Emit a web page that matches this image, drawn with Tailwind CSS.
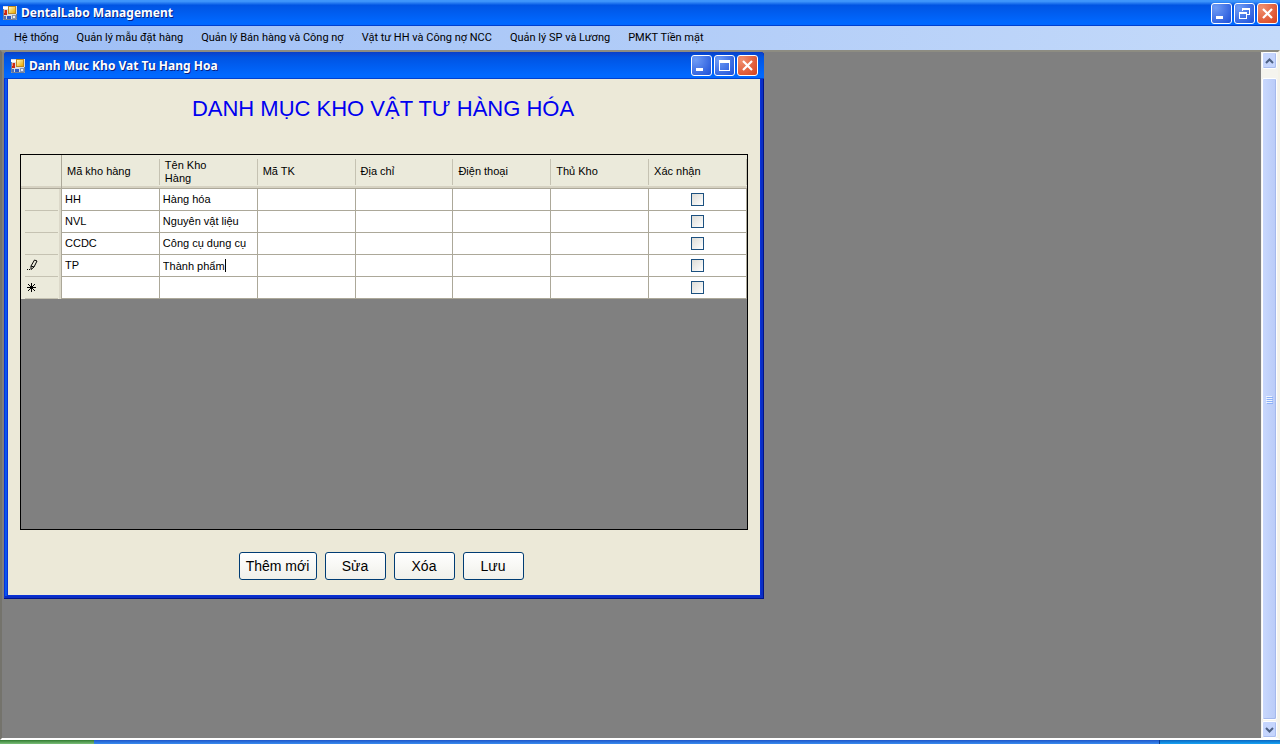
<!DOCTYPE html>
<html lang="vi">
<head>
<meta charset="utf-8">
<meta name="viewport" content="width=device-width, initial-scale=1">
<title>DentalLabo Management</title>
<script src="https://cdn.jsdelivr.net/npm/@tailwindcss/browser@4"></script>
</head>
<body class="flex h-screen flex-col overflow-hidden bg-[#808080] font-['Liberation_Sans',sans-serif] text-[11px] text-black">

<svg class="absolute size-0" aria-hidden="true">
  <linearGradient id="gold" x1="0" y1="0" x2="1" y2="1"><stop offset="0" stop-color="#fff9b8"/><stop offset="1" stop-color="#eda800"/></linearGradient>
  <symbol id="app" viewBox="0 0 14 14">
    <rect width="14" height="14" fill="#d8dce4"/>
    <rect y="1" width="5" height="2" fill="#fff"/>
    <rect x="1" y="4" width="3" height="5" fill="#cc2a12"/><rect x="1" y="4" width="1" height="3" fill="#f7896a"/>
    <rect x="5" y="0" width="8" height="8" fill="#c08a20"/><rect x="6" y="1" width="6" height="6" fill="url(#gold)"/>
    <rect x="1" y="10" width="2" height="3" fill="#4d6fb5"/><rect x="4" y="10" width="4" height="3" fill="#2d59c0"/><rect x="9" y="9" width="4" height="4" fill="#8795b3"/><rect x="10" y="10" width="2" height="2" fill="#e8ecf4"/>
    <path d="M.5 3v10.500H13.500V8" fill="none" stroke="#71809c"/>
  </symbol>
  <symbol id="min" viewBox="0 0 19 19"><rect x="4" y="12" width="7" height="3" fill="#fff"/></symbol>
  <symbol id="max" viewBox="0 0 19 19"><path d="M4 4h11v11H4zM5 7v7h9V7z" fill="#fff" fill-rule="evenodd"/></symbol>
  <symbol id="restore" viewBox="0 0 19 19"><path d="M7 4h8v7h-3v-1h2V6H8v1H7zM4 8h8v7H4zM5 10v4h6v-4z" fill="#fff" fill-rule="evenodd"/></symbol>
  <symbol id="close" viewBox="0 0 19 19"><path d="M5 5l9 9M14 5l-9 9" stroke="#fff" stroke-width="2.200"/></symbol>
</svg>

<header class="flex h-[26px] shrink-0 items-center gap-1 bg-linear-to-b from-[#3f96fb] from-5% via-[#0054e3] via-20% to-[#0068ff] to-85% pr-[2px] pl-[3px] shadow-[inset_0_-1px_0_#0040d0]">
  <svg class="size-[14px]" aria-hidden="true"><use href="#app"/></svg>
  <h1 class="flex-1 font-['Noto_Sans',sans-serif] text-[12px] font-bold text-white [text-shadow:1px_1px_0_#0a1f80]">DentalLabo Management</h1>
  <div class="flex gap-[2px]">
    <button aria-label="Thu nhỏ" class="size-[21px] rounded-[3px] border border-white bg-radial-[at_20%_20%] from-[#6f9cf5] to-[#1c4fd8]"><svg class="size-[19px]"><use href="#min"/></svg></button>
    <button aria-label="Khôi phục" class="size-[21px] rounded-[3px] border border-white bg-radial-[at_20%_20%] from-[#6f9cf5] to-[#1c4fd8]"><svg class="size-[19px]"><use href="#restore"/></svg></button>
    <button aria-label="Đóng" class="size-[21px] rounded-[3px] border border-white bg-radial-[at_20%_20%] from-[#f0906f] to-[#d8401c]"><svg class="size-[19px]"><use href="#close"/></svg></button>
  </div>
</header>

<nav class="flex h-[24px] shrink-0 items-center gap-[18px] bg-linear-to-r from-[#9ebef5] to-[#c4dafa] px-[14px] font-[Roboto,sans-serif] text-[11px] whitespace-nowrap">
  <button>Hệ thống</button>
  <button>Quản lý mẫu đặt hàng</button>
  <button>Quản lý Bán hàng và Công nợ</button>
  <button>Vật tư HH và Công nợ NCC</button>
  <button>Quản lý SP và Lương</button>
  <button>PMKT Tiền mặt</button>
</nav>

<div class="flex min-h-0 flex-1 border-t-2 border-r-2 border-b-2 border-l-2 border-t-[#8d8c82] border-r-[#f4f2e8] border-b-white border-l-[#74736c]">
  <main class="relative flex-1 overflow-hidden">
    <section aria-labelledby="win" class="absolute top-0 left-[2px] flex w-[760px] flex-col rounded-t-[4px] bg-[#0831d9] px-1 pb-1 shadow-[inset_-1px_-1px_0_#00138c,inset_1px_0_0_#0831d9,inset_-3px_-3px_0_#0a2ec4,inset_3px_0_0_#0855ee]">
      <div class="-mx-1 flex h-[27px] items-center gap-1 rounded-t-[4px] bg-linear-to-b from-[#0a3fc8] via-[#0054e3] via-20% to-[#0068ff] to-85% pr-[6px] pl-[7px] shadow-[inset_0_-1px_0_#0040d0]">
        <svg class="size-[14px]" aria-hidden="true"><use href="#app"/></svg>
        <h2 id="win" class="flex-1 font-['Noto_Sans',sans-serif] text-[12px] font-bold text-white [text-shadow:1px_1px_0_#0a1f80]">Danh Muc Kho Vat Tu Hang Hoa</h2>
        <div class="flex gap-[2px]">
          <button aria-label="Thu nhỏ" class="size-[21px] rounded-[3px] border border-white bg-radial-[at_20%_20%] from-[#6f9cf5] to-[#1c4fd8]"><svg class="size-[19px]"><use href="#min"/></svg></button>
          <button aria-label="Phóng to" class="size-[21px] rounded-[3px] border border-white bg-radial-[at_20%_20%] from-[#6f9cf5] to-[#1c4fd8]"><svg class="size-[19px]"><use href="#max"/></svg></button>
          <button aria-label="Đóng" class="size-[21px] rounded-[3px] border border-white bg-radial-[at_20%_20%] from-[#f0906f] to-[#d8401c]"><svg class="size-[19px]"><use href="#close"/></svg></button>
        </div>
      </div>

      <div class="bg-[#ece9d8] px-3 pt-4 pb-[15px]">
        <h3 class="pr-[2px] text-center text-[22px] leading-[27px] text-[#0000f0]">DANH MỤC KHO VẬT TƯ HÀNG HÓA</h3>
        <div class="mt-8 h-[376px] border border-black bg-[#808080]">
          <table class="w-full table-fixed border-separate border-spacing-0 text-left">
            <colgroup><col class="w-[41px]"><col><col><col><col><col><col><col></colgroup>
            <thead>
              <tr class="h-[34px] bg-[#ebeadb] *:border-b *:border-[#aca899] *:p-0 *:font-normal *:leading-[13px] *:shadow-[inset_0_-2px_0_#d6d2c2]">
                <td class="border-r"></td>
                <th scope="col"><div class="flex h-[26px] items-center border-r border-[#c5c2b2] pl-[5px]">Mã kho hàng</div></th>
                <th scope="col"><div class="flex h-[26px] items-center border-r border-[#c5c2b2] pl-[5px]">Tên Kho<br>Hàng</div></th>
                <th scope="col"><div class="flex h-[26px] items-center border-r border-[#c5c2b2] pl-[5px]">Mã TK</div></th>
                <th scope="col"><div class="flex h-[26px] items-center border-r border-[#c5c2b2] pl-[5px]">Địa chỉ</div></th>
                <th scope="col"><div class="flex h-[26px] items-center border-r border-[#c5c2b2] pl-[5px]">Điện thoại</div></th>
                <th scope="col"><div class="flex h-[26px] items-center border-r border-[#c5c2b2] pl-[5px]">Thủ Kho</div></th>
                <th scope="col"><div class="flex h-[26px] items-center border-r border-[#c5c2b2] pl-[5px]">Xác nhận</div></th>
              </tr>
            </thead>
            <tbody id="rows"></tbody>
          </table>
        </div>
        <div class="mt-[22px] flex justify-center gap-2 pr-[6px] text-[14px]">
          <button class="h-7 w-[78px] rounded-[3px] border border-[#003c74] bg-linear-to-b from-white to-[#f0f0ea]">Thêm mới</button>
          <button class="h-7 w-[61px] rounded-[3px] border border-[#003c74] bg-linear-to-b from-white to-[#f0f0ea]">Sửa</button>
          <button class="h-7 w-[61px] rounded-[3px] border border-[#003c74] bg-linear-to-b from-white to-[#f0f0ea]">Xóa</button>
          <button class="h-7 w-[61px] rounded-[3px] border border-[#003c74] bg-linear-to-b from-white to-[#f0f0ea]">Lưu</button>
        </div>
      </div>
    </section>
  </main>

  <div class="flex w-[17px] flex-col gap-[1px] bg-[#f5f4ee] px-[1px]">
    <button aria-label="Cuộn lên" class="flex h-[17px] items-center justify-center rounded-[2px] border border-white bg-[#c5d5fd] shadow-[inset_-1px_-1px_0_#a9bdf0]"><svg class="h-[6px] w-[9px]" viewBox="0 0 9 6"><path d="M1 5l3.500-3.500L8 5" fill="none" stroke="#4d6185" stroke-width="2"/></svg></button>
    <div class="mt-2 flex flex-1 flex-col items-center justify-center gap-[1px] rounded-[2px] border border-white bg-linear-to-r from-[#c9d8fd] to-[#b9cbf8] pr-[2px] shadow-[inset_-1px_-1px_0_#a5b9ec]">
      <i class="h-[1px] w-[6px] bg-[#eef4fe] shadow-[1px_1px_0_#8cb0f8]"></i><i class="h-[1px] w-[6px] bg-[#eef4fe] shadow-[1px_1px_0_#8cb0f8]"></i><i class="h-[1px] w-[6px] bg-[#eef4fe] shadow-[1px_1px_0_#8cb0f8]"></i><i class="h-[1px] w-[6px] bg-[#eef4fe] shadow-[1px_1px_0_#8cb0f8]"></i>
    </div>
    <button aria-label="Cuộn xuống" class="flex h-[17px] items-center justify-center rounded-[2px] border border-white bg-[#c5d5fd] shadow-[inset_-1px_-1px_0_#a9bdf0]"><svg class="h-[6px] w-[9px]" viewBox="0 0 9 6"><path d="M1 1l3.500 3.500L8 1" fill="none" stroke="#4d6185" stroke-width="2"/></svg></button>
  </div>
</div>

<footer class="flex h-1 shrink-0">
  <div class="w-[94px] bg-linear-to-b from-[#2f7a2f] to-[#7cc07a]"></div>
  <div class="flex-1 bg-linear-to-b from-[#1f55c8] to-[#3a8cf0]"></div>
  <div class="w-[121px] border-l border-[#0a3a90] bg-linear-to-b from-[#0c66c0] to-[#18a4f4]"></div>
</footer>

<script>
  const cell = 'h-[22px] border-r border-b border-[#aca899] bg-white p-0 pl-[3px] whitespace-nowrap';
  const pencil = '<svg class="ml-[5px] size-[12px]" viewBox="0 0 12 12"><path d="M1 10h1v1H1zM3 10h1v1H3z"/><path d="M5 10.500V7L8.500 1l2.500 1L8 8zM5 7l3 1" fill="none" stroke="#000"/></svg>';
  const star = '<svg class="ml-[6px] size-[9px]" viewBox="0 0 9 9"><path d="M4.500 0v9M0 4.500h9M1 1l7 7M8 1l-7 7" stroke="#000"/></svg>';
  const rows = [['HH', 'Hàng hóa', ''], ['NVL', 'Nguyên vật liệu', ''], ['CCDC', 'Công cụ dụng cụ', ''], ['TP', '', pencil], ['', '', star]];
  const editor = '<div class="flex items-center"><input aria-label="Tên Kho Hàng" value="Thành phẩm" class="field-sizing-content h-[18px] p-0 outline-none"><i class="h-[13px] w-[1px] bg-black"></i></div>';
  document.getElementById('rows').innerHTML = rows.map(([code, name, mark], i) => `<tr>
    <th class="h-[22px] border-r border-[#aca899] bg-[#ebeadb] p-0 shadow-[inset_-2px_0_0_#dcd9ca]"><div class="mr-[3px] ml-1 h-[22px] border-b border-[#c5c2b2]"><div class="-ml-1 flex h-[20px] items-center">${mark}</div></div></th>
    <td class="${cell}">${code}</td><td class="${cell}">${i === 3 ? editor : name}</td>
    ${`<td class="${cell}"></td>`.repeat(4)}
    <td class="h-[22px] border-r border-b border-[#aca899] bg-white p-0"><input type="checkbox" aria-label="Xác nhận ${code}" class="mx-auto block size-[13px] appearance-none border border-[#1c5180] bg-linear-to-br from-[#dcdcd7] to-white"></td></tr>`).join('');
</script>
</body>
</html>
